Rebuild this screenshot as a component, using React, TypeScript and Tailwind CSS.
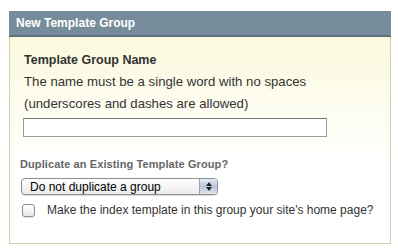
import * as React from 'react';

const App: React.FC = () => {
    return (
        <div className="w-[398px] h-[250px] bg-white pt-[11px] px-[9px] pr-[7px]" style={{ fontFamily: '"Liberation Sans", Arial, sans-serif' }}>
            <div className="h-[26px] bg-[#778c9a] border-b-2 border-[#5f7483] flex items-center px-[7px]">
                <span className="text-white font-bold text-[12px]">New Template Group</span>
            </div>
            <div className="h-[207px] border border-t-0 border-[#d2cea6] bg-gradient-to-b from-[#fbf9dc] to-white to-[60%]">
                <div className="pl-[14px] pt-[15px]">
                    <div className="text-[12.5px] font-bold text-[#333] leading-[16px]">Template Group Name</div>
                    <div className="text-[13.2px] text-[#333] leading-[16px] mt-[6px]">The name must be a single word with no spaces</div>
                    <div className="text-[13.2px] text-[#333] leading-[16px] mt-[6px]">(underscores and dashes are allowed)</div>
                    <input type="text" className="block mt-[6px] -ml-px w-[304px] h-[19px] border border-[#9a9a9a] border-t-[#777] bg-white outline-none" />
                </div>
                <div className="pl-[10px] mt-[20px]">
                    <div className="text-[11px] font-bold text-[#666] tracking-[0.1px] leading-[14px]">Duplicate an Existing Template Group?</div>
                    <div className="mt-[7px] ml-px w-[197px] h-[17px] rounded-[4px] border border-[#8e8e8e] bg-gradient-to-b from-white to-[#ececec] flex items-center shadow-[0_1px_1px_rgba(0,0,0,0.15)]">
                        <span className="flex-1 pl-[8px] text-[12px] text-black leading-none">Do not duplicate a group</span>
                        <div className="w-[18px] h-full rounded-r-[3px] border-l border-[#9aa3b0] bg-gradient-to-b from-[#e6edf6] via-[#b9c6d8] to-[#dde6f1] flex flex-col items-center justify-center gap-[1px]">
                            <svg width="6" height="4" viewBox="0 0 6 4"><path d="M3 0 L6 4 L0 4 Z" fill="#222" /></svg>
                            <svg width="6" height="4" viewBox="0 0 6 4"><path d="M0 0 L6 0 L3 4 Z" fill="#222" /></svg>
                        </div>
                    </div>
                    <label className="flex items-center mt-[7px] ml-[2px]">
                        <span className="w-[13px] h-[13px] rounded-[3px] border border-[#8f8f8f] bg-gradient-to-b from-white to-[#e8e8e8] shadow-[0_1px_1px_rgba(0,0,0,0.12)]" />
                        <span className="ml-[12px] text-[12px] text-[#333] leading-[16px]">Make the index template in this group your site's home page?</span>
                    </label>
                </div>
            </div>
        </div>
    );
};

export default App;
